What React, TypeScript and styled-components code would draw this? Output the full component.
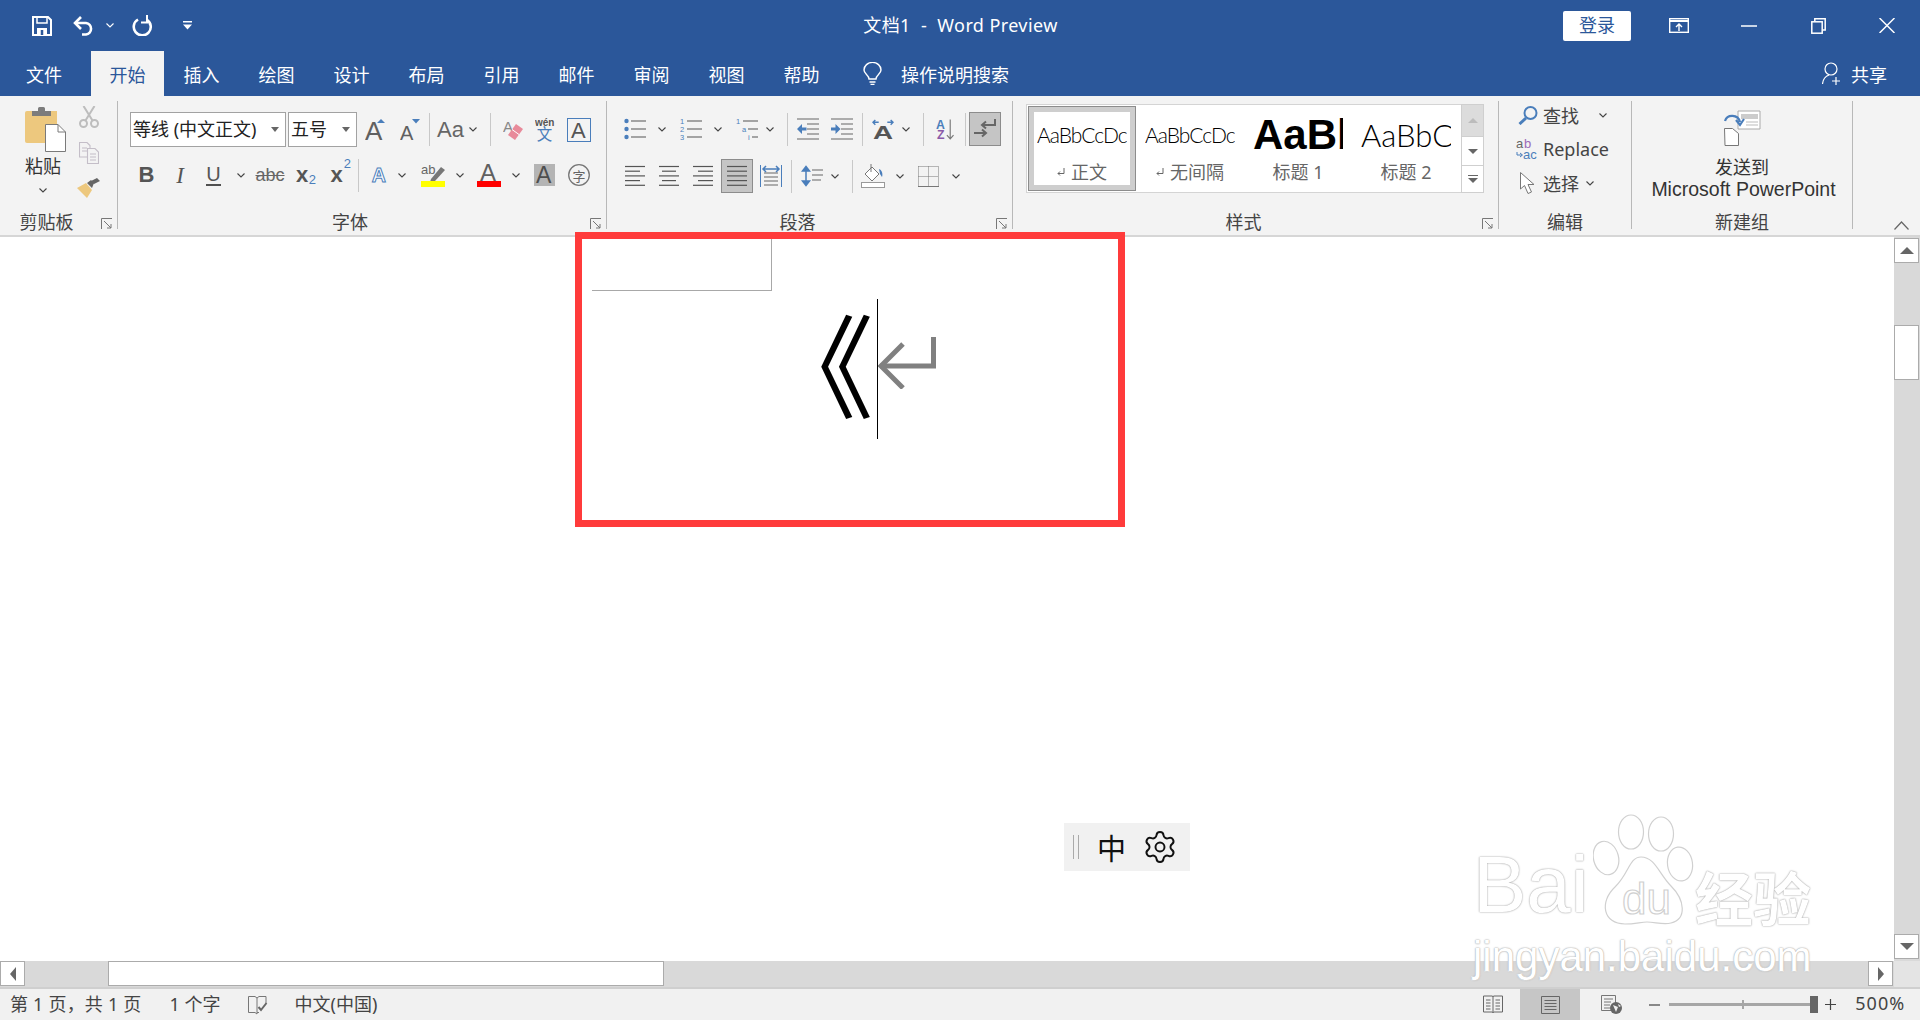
import React from "react";
import styled, { createGlobalStyle } from "styled-components";
import { Settings } from "lucide-react";

const UI_FONT = `"Noto Sans", "Noto Sans CJK SC", sans-serif`;
const ARIAL = `"Liberation Sans", "Noto Sans CJK SC", sans-serif`;
const BLUE = "#2b579a";
const ICON_BLUE = "#4a7ebb";
const ICON_GRAY = "#606060";

const GlobalStyle = createGlobalStyle`
  html, body { margin: 0; padding: 0; height: 100%; background: #fff; }
  #root { height: 100%; }
`;

// ==================== Shell ====================

const App_ = styled.div`
  position: relative;
  width: 1920px;
  height: 1020px;
  overflow: hidden;
  display: flex;
  flex-direction: column;
  font-family: ${UI_FONT};
  font-size: 18px;
  color: #444;
`;

const TitleBar = styled.div`
  height: 51px;
  flex: none;
  display: flex;
  align-items: center;
  background: ${BLUE};
  color: #fff;
`;

const TitleText = styled.div`
  width: 195px;
  margin-left: 671px;
  padding-bottom: 4px;
  font-size: 18px;
  letter-spacing: 0.4px;
  white-space: pre;
  text-align: center;
`;

const QatIcon = styled.span<{ $ml: number; $w: number }>`
  display: inline-flex;
  flex: none;
  justify-content: center;
  width: ${(p) => p.$w}px;
  margin-left: ${(p) => p.$ml}px;
`;

const SignIn = styled.button`
  width: 68px;
  height: 30px;
  margin-left: 505px;
  flex: none;
  border: 0;
  border-radius: 2px;
  background: #fff;
  color: ${BLUE};
  font: 18px ${UI_FONT};
  padding: 0 0 4px;
`;

const TabBar = styled.div`
  height: 45px;
  flex: none;
  display: flex;
  align-items: stretch;
  padding-left: 7px;
  background: ${BLUE};
  color: #fff;
`;

const Tab = styled.div<{ $w?: number; $active?: boolean; $ml?: number }>`
  width: ${(p) => p.$w ?? 75}px;
  margin-left: ${(p) => p.$ml ?? 0}px;
  flex: none;
  display: flex;
  align-items: center;
  justify-content: center;
  box-sizing: border-box;
  background: ${(p) => (p.$active ? "#f3f3f3" : "transparent")};
  color: ${(p) => (p.$active ? BLUE : "#fff")};
`;

const TellMe = styled.div`
  display: flex;
  align-items: center;
  margin-left: 24px;
  gap: 19px;
`;

const ShareBox = styled.div`
  display: flex;
  align-items: center;
  margin-left: 813px;
  gap: 11px;
`;

// ==================== Ribbon ====================

const Ribbon = styled.div`
  height: 141px;
  flex: none;
  box-sizing: border-box;
  display: flex;
  padding-top: 5px;
  background: #f3f3f3;
  border-bottom: 2px solid #d6d6d6;
`;

const Group = styled.div<{ $w: number }>`
  width: ${(p) => p.$w}px;
  height: 128px;
  flex: none;
  box-sizing: border-box;
  display: flex;
  flex-direction: column;
  border-right: 1px solid #b8b8b8;
`;

const GroupBody = styled.div`
  height: 112px;
  flex: none;
  display: flex;
  flex-direction: column;
`;

const LabelRow = styled.div`
  height: 16px;
  display: flex;
  line-height: 19px;
`;

const Label = styled.div`
  flex: 1;
  text-align: center;
  white-space: nowrap;
  color: #444;
`;

const LauncherBox = styled.span`
  width: 24px;
  height: 16px;
  flex: none;
  display: flex;
  padding-left: 8px;
  padding-top: 5px;
  box-sizing: border-box;
`;

const Row = styled.div<{ $h: number; $mt: number; $pl: number }>`
  height: ${(p) => p.$h}px;
  margin-top: ${(p) => p.$mt}px;
  padding-left: ${(p) => p.$pl}px;
  display: flex;
  align-items: center;
`;

const ClipboardRow = styled.div`
  display: flex;
  align-items: flex-start;
`;

const Tool = styled.span<{ $w: number; $ml?: number }>`
  width: ${(p) => p.$w}px;
  margin-left: ${(p) => p.$ml ?? 0}px;
  flex: none;
  display: inline-flex;
  align-items: center;
  justify-content: center;
  position: relative;
`;

const ToggledTool = styled(Tool)`
  height: 34px;
  box-sizing: border-box;
  background: #c5c5c5;
  border: 1px solid #8c8c8c;
`;

const Sep = styled.i<{ $ml: number }>`
  display: block;
  flex: none;
  width: 1px;
  height: 33px;
  margin-left: ${(p) => p.$ml}px;
  background: #c8c8c8;
`;

const FontSelect = styled.div<{ $w: number; $ml?: number }>`
  width: ${(p) => p.$w}px;
  margin-left: ${(p) => p.$ml ?? 0}px;
  height: 35px;
  flex: none;
  box-sizing: border-box;
  display: flex;
  align-items: center;
  justify-content: space-between;
  padding: 0 6px 0 2px;
  background: #fff;
  border: 1px solid #a2a2a2;
  color: #222;
  white-space: nowrap;
`;

const SelectText = styled.span`
  padding-bottom: 4px;
`;

const SelectArrow = styled.i`
  width: 0;
  height: 0;
  border-left: 4.5px solid transparent;
  border-right: 4.5px solid transparent;
  border-top: 5px solid #666;
`;

const Glyph = styled.span<{ $size: number; $bold?: boolean; $italic?: boolean; $serif?: boolean; $under?: boolean; $strike?: boolean; $light?: boolean }>`
  font-family: ${(p) => (p.$serif ? `"Liberation Serif", serif` : ARIAL)};
  font-size: ${(p) => p.$size}px;
  font-weight: ${(p) => (p.$bold ? 700 : 400)};
  font-style: ${(p) => (p.$italic ? "italic" : "normal")};
  color: ${(p) => (p.$light ? "#666" : "#555")};
  line-height: 1;
  text-decoration: ${(p) => (p.$strike ? "line-through" : "none")};
  border-bottom: ${(p) => (p.$under ? "2px solid #505050" : "0")};
`;

const XGlyph = styled(Glyph)`
  margin-right: 7px;
`;

const Script = styled.span<{ $up?: boolean }>`
  font: 13px ${ARIAL};
  color: ${ICON_BLUE};
  position: absolute;
  right: -1px;
  top: ${(p) => (p.$up ? "-8px" : "8px")};
`;

const PasteColumn = styled.div`
  width: 72px;
  margin-left: 7px;
  padding-top: 6px;
  flex: none;
  display: flex;
  flex-direction: column;
  align-items: center;
  & > svg { margin-left: 4px; }
`;

const PasteText = styled.div`
  margin-top: 2px;
  line-height: 24px;
  color: #333;
`;

const PasteChevron = styled.span`
  margin-top: 8px;
  line-height: 0;
`;

const SmallTools = styled.div`
  width: 25px;
  margin-left: -3px;
  padding-top: 5px;
  display: flex;
  flex-direction: column;
  align-items: center;
  gap: 14px;
`;

const Gallery = styled.div`
  display: flex;
  margin: 3px 0 0 13px;
`;

const StyleList = styled.div`
  width: 435px;
  height: 89px;
  box-sizing: border-box;
  display: flex;
  padding: 1px 0 0 1px;
  background: #fff;
  border: 1px solid #d4d4d4;
  border-right: 0;
`;

const StyleItem = styled.div<{ $active?: boolean }>`
  width: 108px;
  height: 85px;
  box-sizing: border-box;
  border: 1px solid ${(p) => (p.$active ? "#8c8c8c" : "transparent")};
  box-shadow: ${(p) => (p.$active ? "inset 0 0 0 5px #cecece" : "none")};
  display: flex;
  flex-direction: column;
  align-items: center;
`;

const Preview = styled.div<{ $size: number; $bold?: boolean; $light?: boolean; $track?: number }>`
  width: 90px;
  height: 56px;
  flex: none;
  overflow: hidden;
  white-space: nowrap;
  line-height: 56px;
  font-family: ${(p) => (p.$light ? `"Lato", sans-serif` : ARIAL)};
  font-size: ${(p) => p.$size}px;
  font-weight: ${(p) => (p.$bold ? 700 : p.$light ? 300 : 400)};
  letter-spacing: ${(p) => p.$track ?? 0}px;
  color: #000;
`;

const Caption = styled.div`
  display: flex;
  align-items: center;
  gap: 6px;
  margin-top: 1px;
  line-height: 16px;
  color: #666;
`;

const ScrollCol = styled.div`
  width: 23px;
  display: flex;
  flex-direction: column;
`;

const ScrollBtn = styled.div<{ $h: number; $dim?: boolean }>`
  height: ${(p) => p.$h}px;
  box-sizing: border-box;
  display: flex;
  flex-direction: column;
  gap: 2px;
  align-items: center;
  justify-content: center;
  background: ${(p) => (p.$dim ? "#dcdcdc" : "#fff")};
  border: 1px solid #cfcfcf;
  margin-top: -1px;
  &:first-child { margin-top: 0; }
`;

const GalleryArrow = styled.i<{ $up?: boolean; $dim?: boolean }>`
  width: 0;
  height: 0;
  border-left: 5px solid transparent;
  border-right: 5px solid transparent;
  ${(p) => (p.$up ? "border-bottom" : "border-top")}: 5px solid ${(p) => (p.$dim ? "#bcbcbc" : "#666")};
`;

const GalleryBar = styled.i`
  width: 10px;
  height: 1px;
  background: #666;
`;

const EditRows = styled.div`
  display: flex;
  flex-direction: column;
  gap: 4px;
  margin-top: -1px;
`;

const EditRow = styled.div`
  height: 30px;
  display: flex;
  align-items: center;
  padding-left: 17px;
`;

const EditIcon = styled.span`
  width: 23px;
  margin-right: 4px;
  flex: none;
  display: inline-flex;
  justify-content: center;
`;

const SendColumn = styled.div`
  padding-top: 9px;
  display: flex;
  flex-direction: column;
  align-items: center;
  line-height: 22px;
  color: #333;
  & > svg { margin-bottom: 10px; }
`;

const SendLatin = styled.span`
  font-family: ${ARIAL};
  font-size: 19.5px;
  padding-left: 3px;
`;

const Collapse = styled.div`
  margin: 120px 0 0 41px;
  line-height: 0;
`;

// ==================== Document ====================

const Work = styled.div`
  flex: 1;
  min-height: 0;
  display: grid;
  grid-template-columns: 1fr 26px;
  grid-template-rows: 1fr 26px;
`;

const Page = styled.div`
  overflow: hidden;
  background: #fff;
`;

const CropMark = styled.div`
  width: 180px;
  height: 54px;
  margin-left: 592px;
  box-sizing: border-box;
  border-right: 1px solid #a8a8a8;
  border-bottom: 1px solid #a8a8a8;
`;

const TextLine = styled.div`
  display: flex;
  height: 140px;
  margin: 8px 0 0 757px;
`;

const BigGlyph = styled.span`
  width: 120px;
  flex: none;
  box-sizing: border-box;
  padding-right: 3px;
  text-align: right;
  font-family: "Noto Sans CJK SC", sans-serif;
  font-size: 112px;
  font-weight: 400;
  line-height: 124px;
  color: #000;
`;

const Caret = styled.i`
  width: 1px;
  height: 140px;
  flex: none;
  background: #000;
`;

const ReturnMark = styled.svg`
  margin-top: 38px;
  flex: none;
`;

const VTrack = styled.div`
  display: flex;
  flex-direction: column;
  padding-top: 1px;
  background: #d9d9d9;
`;

const HTrack = styled.div`
  display: flex;
  background: #d9d9d9;
`;

const ScrollArrowBtn = styled.div<{ $mb?: number; $mr?: number }>`
  width: 25px;
  height: 25px;
  flex: none;
  box-sizing: border-box;
  margin-bottom: ${(p) => p.$mb ?? 0}px;
  margin-right: ${(p) => p.$mr ?? 0}px;
  display: flex;
  align-items: center;
  justify-content: center;
  background: #fff;
  border: 1px solid #ababab;
`;

const TrackGap = styled.div`
  flex: 1;
`;

const VThumb = styled.div`
  width: 25px;
  height: 55px;
  margin-top: 62px;
  box-sizing: border-box;
  background: #fff;
  border: 1px solid #ababab;
`;

const HThumb = styled.div`
  width: 556px;
  height: 25px;
  margin-left: 83px;
  box-sizing: border-box;
  background: #fff;
  border: 1px solid #ababab;
`;

const Corner = styled.div`
  background: #e4e4e4;
`;

const Triangle = styled.i<{ $dir: "up" | "down" | "left" | "right" }>`
  width: 0;
  height: 0;
  ${(p) =>
    p.$dir === "up" || p.$dir === "down"
      ? `border-left: 7px solid transparent; border-right: 7px solid transparent; border-${p.$dir === "up" ? "bottom" : "top"}: 7px solid #666;`
      : `border-top: 7px solid transparent; border-bottom: 7px solid transparent; border-${p.$dir === "left" ? "right" : "left"}: 6px solid #666;`}
`;

// ==================== Status bar ====================

const StatusBar = styled.div`
  height: 33px;
  flex: none;
  box-sizing: border-box;
  display: flex;
  align-items: center;
  background: #f1f1f1;
  border-top: 2px solid #cfcfcf;
  color: #444;
  white-space: pre;
`;

const StatusText = styled.span<{ $ml: number; $track?: number }>`
  margin-left: ${(p) => p.$ml}px;
  padding-bottom: 4px;
  letter-spacing: ${(p) => p.$track ?? 0}px;
  flex: none;
`;

const ViewBtn = styled.span<{ $w: number; $ml: number; $active?: boolean }>`
  width: ${(p) => p.$w}px;
  margin-left: ${(p) => p.$ml}px;
  height: 100%;
  flex: none;
  display: flex;
  align-items: center;
  justify-content: center;
  background: ${(p) => (p.$active ? "#c6c6c6" : "transparent")};
`;

const ZoomGlyph = styled.svg<{ $ml: number }>`
  margin-left: ${(p) => p.$ml}px;
  flex: none;
`;

const ZoomTrack = styled.div`
  position: relative;
  width: 141px;
  height: 3px;
  margin-left: 9px;
  flex: none;
  background: #a6a6a6;
`;

const ZoomTick = styled.i`
  position: absolute;
  left: 73px;
  top: -3px;
  width: 2px;
  height: 9px;
  background: #a6a6a6;
`;

const ZoomHandle = styled.i`
  width: 8px;
  height: 17px;
  flex: none;
  background: #666;
`;

// ==================== Overlays ====================

const RedBox = styled.div`
  position: absolute;
  left: 575px;
  top: 232px;
  width: 550px;
  height: 295px;
  box-sizing: border-box;
  border: 7px solid #ff3b3b;
`;

const ImeBar = styled.div`
  position: absolute;
  left: 1064px;
  top: 823px;
  width: 126px;
  height: 48px;
  box-sizing: border-box;
  padding-left: 9px;
  display: flex;
  align-items: center;
  background: #f1f1f1;
  color: #111;
`;

const ImeHandle = styled.i`
  width: 4px;
  height: 24px;
  flex: none;
  border-left: 1px solid #aaa;
  border-right: 1px solid #aaa;
`;

const ImeChar = styled.span`
  width: 29px;
  margin-left: 18px;
  margin-right: 16px;
  flex: none;
  font: 29px "Noto Sans CJK SC", sans-serif;
  line-height: 1;
`;

const Watermark = styled.div`
  position: absolute;
  left: 1473px;
  top: 812px;
  width: 350px;
  pointer-events: none;
`;

const WatermarkLogo = styled.div`
  display: flex;
  align-items: flex-end;
  height: 113px;
`;

const WatermarkText = styled.span<{ $size: number; $w: number; $cjk?: boolean }>`
  width: ${(p) => p.$w}px;
  flex: none;
  font-family: ${(p) => (p.$cjk ? `"Noto Sans CJK SC", sans-serif` : ARIAL)};
  font-size: ${(p) => p.$size}px;
  font-weight: ${(p) => (p.$cjk ? 700 : 400)};
  line-height: 1;
  white-space: nowrap;
  color: #fff;
  -webkit-text-stroke: ${(p) => (p.$cjk ? "0" : "3px #fff")};
  paint-order: stroke fill;
  text-shadow: 0 0 2px #a0a0a0, 0 0 1px #b5b5b5;
`;

const WatermarkUrl = styled(WatermarkText)`
  display: block;
  margin-top: 11px;
  -webkit-text-stroke: 1px #fff;
`;

// ==================== Icons ====================

const ChevronSvg = styled.svg<{ $ml?: number }>`
  flex: none;
  margin-left: ${(p) => p.$ml ?? 0}px;
`;

const Chevron = ({ ml, color = "#444" }: { ml?: number; color?: string }) => (
  <ChevronSvg width="8" height="5" viewBox="0 0 8 5" $ml={ml}>
    <path d="M.5.5 4 4 7.500.5" fill="none" stroke={color} strokeWidth="1.100" />
  </ChevronSvg>
);

const Launcher = () => (
  <svg width="11" height="11" viewBox="0 0 11 11" fill="none" stroke="#777" strokeWidth="1">
    <path d="M.5 11V.5H11" />
    <path d="M3 3l7 7M10 6v4H6" />
  </svg>
);

const LINE_WIDTHS = {
  left: [[0, 20], [0, 15], [0, 20], [0, 15], [0, 20]],
  center: [[0, 20], [3, 17], [0, 20], [3, 17], [0, 20]],
  right: [[0, 20], [5, 20], [0, 20], [5, 20], [0, 20]],
  justify: [[0, 20], [0, 20], [0, 20], [0, 20], [0, 20]],
};

const AlignIcon = ({ kind }: { kind: keyof typeof LINE_WIDTHS }) => (
  <svg width="20" height="22" viewBox="0 0 20 22" stroke="#555" strokeWidth="1.200">
    {LINE_WIDTHS[kind].map(([a, b], i) => (
      <path key={i} d={`M${a} ${1.5 + i * 4.7}H${b}`} />
    ))}
  </svg>
);

const ListIcon = ({ kind }: { kind: "bullet" | "number" | "multi" }) => (
  <svg width="22" height="22" viewBox="0 0 22 22" fill={ICON_BLUE} stroke="none" fontFamily="Liberation Sans" fontSize="7.500">
    {kind === "bullet" && (
      <>
        <circle cx="2.500" cy="3" r="2.200" />
        <circle cx="2.500" cy="11" r="2.200" />
        <circle cx="2.500" cy="19" r="2.200" />
      </>
    )}
    {kind === "number" && (
      <>
        <text x="0" y="6">1</text>
        <text x="0" y="14">2</text>
        <text x="0" y="22">3</text>
      </>
    )}
    {kind === "multi" && (
      <>
        <text x="0" y="6">1</text>
        <text x="6" y="14">a</text>
        <text x="12" y="22">i</text>
      </>
    )}
    <path
      d={kind === "multi" ? "M7 3H22M12 11H22M16 19H22" : "M7 3H22M7 11H22M7 19H22"}
      fill="none"
      stroke="#555"
      strokeWidth="1.200"
    />
  </svg>
);

const IndentIcon = ({ flip }: { flip?: boolean }) => (
  <svg width="22" height="22" viewBox="0 0 22 22">
    <path d="M0 1H22M10 6H22M10 11H22M10 16H22M0 21H22" stroke="#666" strokeWidth="1.200" />
    {flip ? (
      <path d="M0 9.500H4.500V6L9.500 11 4.500 16V12.500H0Z" fill={ICON_BLUE} />
    ) : (
      <path d="M9.500 9.500H5V6L0 11 5 16V12.500H9.500Z" fill={ICON_BLUE} />
    )}
  </svg>
);

const A = ({ x, y, size, fill = ICON_GRAY, weight = 400 }: { x: number; y: number; size: number; fill?: string; weight?: number }) => (
  <text x={x} y={y} fontSize={size} fontFamily="Liberation Sans" fontWeight={weight} fill={fill}>
    A
  </text>
);

const Mark = () => (
  <svg width="8" height="9" viewBox="0 0 8 9" fill="none" stroke="#666">
    <path d="M7 0V5.500H1M3 3.500L1 5.500L3 7.500" />
  </svg>
);

const App = () => (
  <App_>
    <GlobalStyle />
    <TitleBar>
      <QatIcon $ml={31} $w={21}>
        <svg width="20" height="20" viewBox="0 0 20 20" fill="none" stroke="#fff" strokeWidth="2">
          <path d="M1 1H16L19 4V19H1Z" />
          <path d="M5 12H15V19H5Z" fill="#fff" stroke="none" />
          <path d="M10 14V19" stroke={BLUE} strokeWidth="2.500" />
          <path d="M5 1V7H15V1" strokeWidth="1.500" />
        </svg>
      </QatIcon>
      <QatIcon $ml={21} $w={22}>
        <svg width="22" height="20" viewBox="0 0 22 20" fill="none" stroke="#fff" strokeWidth="2.600">
          <path d="M8 1L2 7L8 13" />
          <path d="M2 7H13A5.800 5.800 0 0 1 13 18.500H9" />
        </svg>
      </QatIcon>
      <QatIcon $ml={10} $w={10}>
        <Chevron color="#fff" />
      </QatIcon>
      <QatIcon $ml={17} $w={21}>
        <svg width="21" height="21" viewBox="0 0 21 21" fill="none" stroke="#fff" strokeWidth="2.600">
          <path d="M6 4.500A8.500 8.500 0 1 0 15 4.800" />
          <path d="M15 0V7.500H9" strokeWidth="2" />
        </svg>
      </QatIcon>
      <QatIcon $ml={29} $w={10}>
        <svg width="9" height="9" viewBox="0 0 9 9" fill="#fff">
          <path d="M0 0H9V1.500H0ZM0 3.500H9L4.500 8.500Z" />
        </svg>
      </QatIcon>
      <TitleText>文档1  -  Word Preview</TitleText>
      <SignIn>登录</SignIn>
      <QatIcon $ml={38} $w={20}>
        <svg width="20" height="15" viewBox="0 0 20 15" fill="none" stroke="#fff" strokeWidth="1.400">
          <rect x=".7" y=".7" width="18.600" height="13.600" />
          <path d="M1 3H19" strokeWidth="2" />
          <path d="M10 13V6M7 9L10 6L13 9" />
        </svg>
      </QatIcon>
      <QatIcon $ml={52} $w={16}>
        <svg width="16" height="2" viewBox="0 0 16 2"><path d="M0 1H16" stroke="#fff" strokeWidth="1.500" /></svg>
      </QatIcon>
      <QatIcon $ml={54} $w={15}>
        <svg width="15" height="16" viewBox="0 0 15 16" fill="none" stroke="#fff" strokeWidth="1.500">
          <rect x=".8" y="3.800" width="10.400" height="11.400" />
          <path d="M3.800 3.500V.8H14.200V12H11.500" />
        </svg>
      </QatIcon>
      <QatIcon $ml={53} $w={16}>
        <svg width="16" height="15" viewBox="0 0 16 15" fill="none" stroke="#fff" strokeWidth="1.500">
          <path d="M.5 0L15.500 15M15.500 0L.5 15" />
        </svg>
      </QatIcon>
    </TitleBar>

    <TabBar>
      <Tab $w={74}>文件</Tab>
      <Tab $w={73} $ml={10} $active>开始</Tab>
      {["插入", "绘图", "设计", "布局", "引用", "邮件", "审阅", "视图", "帮助"].map((t) => (
        <Tab key={t}>{t}</Tab>
      ))}
      <TellMe>
        <svg width="19" height="23" viewBox="0 0 19 23" fill="none" stroke="#fff" strokeWidth="1.400">
          <path d="M6 17C6 13 1 12 1 8A8.400 7.500 0 0 1 18 8C18 12 13 13 13 17Z" />
          <path d="M6.500 20H12.500M7.500 22.500H11.500" />
        </svg>
        操作说明搜索
      </TellMe>
      <ShareBox>
        <svg width="18" height="23" viewBox="0 0 18 23" fill="none" stroke="#fff" strokeWidth="1.200">
          <circle cx="9" cy="7" r="6" />
          <path d="M.5 22C1 17 4 14 7 13M14 15V23M10 19H18" />
        </svg>
        共享
      </ShareBox>
    </TabBar>

    <Ribbon>
      <Group $w={118}>
        <GroupBody>
          <ClipboardRow>
            <PasteColumn>
              <svg width="41" height="45" viewBox="0 0 41 45">
                <path d="M2 4H32V36H2A2 2 0 0 1 0 34V6A2 2 0 0 1 2 4Z" fill="#edc87e" />
                <path d="M7 9V4H13V1.500A1.500 1.500 0 0 1 14.500 0H18.500A1.500 1.500 0 0 1 20 1.500V4H26V9Z" fill="#7c7c7c" />
                <path d="M20.500 17.500H33L40.500 25V44.500H20.500Z" fill="#fff" stroke="#7a7a7a" />
                <path d="M33 17.500V25H40.500" fill="none" stroke="#7a7a7a" />
              </svg>
              <PasteText>粘贴</PasteText>
              <PasteChevron>
                <Chevron />
              </PasteChevron>
            </PasteColumn>
            <SmallTools>
              <svg width="20" height="22" viewBox="0 0 20 22" fill="none" stroke="#bdbdbd" strokeWidth="2">
                <circle cx="4.500" cy="17.500" r="3.500" />
                <circle cx="15.500" cy="17.500" r="3.500" />
                <path d="M6.500 14.500L15.500 0M13.500 14.500L4.500 0" />
              </svg>
              <svg width="20" height="22" viewBox="0 0 20 22" fill="#f3f3f3" stroke="#c4bec8" strokeWidth="1.100">
                <path d="M.5.500H8L11 3.500V15H.5Z" />
                <path d="M8.500 6.500H16L19.500 10V21.500H8.500Z" />
                <path d="M3 6H8M3 9H8M11 12H17M11 15H17M11 18H17" />
              </svg>
              <svg width="23" height="20" viewBox="0 0 23 20">
                <path d="M0 10L9 5L15 12L10 20Z" fill="#edc87e" />
                <path d="M10 5L14 2L17 5L15 10ZM14 3L20 0L23 3L17 6Z" fill="#666" />
              </svg>
            </SmallTools>
          </ClipboardRow>
        </GroupBody>
        <LabelRow>
          <Label>剪贴板</Label>
          <LauncherBox><Launcher /></LauncherBox>
        </LabelRow>
      </Group>

      <Group $w={489}>
        <GroupBody>
          <Row $h={35} $mt={11} $pl={12}>
            <FontSelect $w={156}><SelectText>等线 (中文正文)</SelectText><SelectArrow /></FontSelect>
            <FontSelect $w={69} $ml={2}><SelectText>五号</SelectText><SelectArrow /></FontSelect>
            <Tool $w={20} $ml={8}>
              <svg width="20" height="22" viewBox="0 0 20 22">
                <A x={0} y={21} size={26} />
                <path d="M12 4L16 0L20 4Z" fill={ICON_BLUE} />
              </svg>
            </Tool>
            <Tool $w={20} $ml={15}>
              <svg width="20" height="22" viewBox="0 0 20 22">
                <A x={0} y={21} size={20} />
                <path d="M12 0H20L16 4.500Z" fill={ICON_BLUE} />
              </svg>
            </Tool>
            <Sep $ml={9} />
            <Tool $w={23} $ml={9}>
              <Glyph $size={22} $light>Aa</Glyph>
            </Tool>
            <Tool $w={8} $ml={7}><Chevron /></Tool>
            <Sep $ml={13} />
            <Tool $w={20} $ml={12}>
              <svg width="20" height="22" viewBox="0 0 20 22">
                <A x={0} y={13} size={15} fill="#888" />
                <path d="M13 5L20 10L12 21L5 16Z" fill="#e88a9a" />
                <path d="M9 10.500L16 15.500" stroke="#fff" strokeWidth="1" />
              </svg>
            </Tool>
            <Tool $w={20} $ml={12}>
              <svg width="22" height="24" viewBox="0 0 22 24">
                <text x="0" y="8" fontSize="11" fontWeight="700" fontFamily="Liberation Sans" fill="#555">wén</text>
                <text x="2" y="23" fontSize="17" fontFamily="Noto Sans CJK SC" fill={ICON_BLUE}>文</text>
              </svg>
            </Tool>
            <Tool $w={24} $ml={12}>
              <svg width="24" height="24" viewBox="0 0 24 24">
                <rect x=".5" y=".5" width="23" height="23" fill="none" stroke={ICON_BLUE} />
                <A x={4} y={20} size={22} fill="#555" />
              </svg>
            </Tool>
          </Row>
          <Row $h={34} $mt={11} $pl={22}>
            <Tool $w={13}><Glyph $size={22} $bold>B</Glyph></Tool>
            <Tool $w={12} $ml={21}><Glyph $size={23} $italic $serif>I</Glyph></Tool>
            <Tool $w={13} $ml={21}><Glyph $size={20} $under>U</Glyph></Tool>
            <Tool $w={8} $ml={17}><Chevron /></Tool>
            <Tool $w={24} $ml={13}><Glyph $size={18} $strike $light>abc</Glyph></Tool>
            <Tool $w={19} $ml={14}>
              <XGlyph $size={22} $bold>x</XGlyph>
              <Script>2</Script>
            </Tool>
            <Tool $w={20} $ml={15}>
              <XGlyph $size={22} $bold>x</XGlyph>
              <Script $up>2</Script>
            </Tool>
            <Sep $ml={8} />
            <Tool $w={18} $ml={11}>
              <svg width="22" height="24" viewBox="0 0 22 24">
                <text x="2" y="21" fontSize="24" fontFamily="Liberation Sans" fontWeight="700" fill="#fff" stroke={ICON_BLUE} strokeWidth="1.200">A</text>
              </svg>
            </Tool>
            <Tool $w={8} $ml={10}><Chevron /></Tool>
            <Tool $w={24} $ml={15}>
              <svg width="24" height="24" viewBox="0 0 24 24">
                <text x="0" y="11" fontSize="13" fontFamily="Liberation Sans" fill="#666">ab</text>
                <path d="M10 16L20 4L24 7L14 18L9 19Z" fill="#777" />
                <rect y="18" width="24" height="6" fill="#ffff00" />
              </svg>
            </Tool>
            <Tool $w={8} $ml={11}><Chevron /></Tool>
            <Tool $w={24} $ml={13}>
              <svg width="24" height="24" viewBox="0 0 24 24">
                <A x={3} y={18} size={24} />
                <rect y="18" width="24" height="6" fill="#ff0000" />
              </svg>
            </Tool>
            <Tool $w={8} $ml={11}><Chevron /></Tool>
            <Tool $w={21} $ml={14}>
              <svg width="21" height="22" viewBox="0 0 21 22">
                <rect width="21" height="22" fill="#b4b4b4" />
                <A x={2} y={19} size={23} fill="#4e4e4e" weight={400} />
              </svg>
            </Tool>
            <Tool $w={22} $ml={13}>
              <svg width="22" height="22" viewBox="0 0 22 22">
                <circle cx="11" cy="11" r="10.300" fill="none" stroke="#777" strokeWidth="1.300" />
                <text x="4.500" y="16.500" fontSize="13" fontFamily="Noto Sans CJK SC" fill="#666">字</text>
              </svg>
            </Tool>
          </Row>
        </GroupBody>
        <LabelRow>
          <Label>字体</Label>
          <LauncherBox><Launcher /></LauncherBox>
        </LabelRow>
      </Group>

      <Group $w={406}>
        <GroupBody>
          <Row $h={34} $mt={11} $pl={17}>
            <Tool $w={22}><ListIcon kind="bullet" /></Tool>
            <Tool $w={8} $ml={12}><Chevron /></Tool>
            <Tool $w={22} $ml={14}><ListIcon kind="number" /></Tool>
            <Tool $w={8} $ml={12}><Chevron /></Tool>
            <Tool $w={22} $ml={14}><ListIcon kind="multi" /></Tool>
            <Tool $w={8} $ml={8}><Chevron /></Tool>
            <Sep $ml={13} />
            <Tool $w={22} $ml={9}><IndentIcon /></Tool>
            <Tool $w={22} $ml={12}><IndentIcon flip /></Tool>
            <Sep $ml={9} />
            <Tool $w={22} $ml={9}>
              <svg width="23" height="20" viewBox="0 0 23 20">
                <path d="M7 3H1M3.500.5L1 3L3.500 5.500M16 3H22M19.500.5L22 3L19.500 5.500" fill="none" stroke={ICON_BLUE} strokeWidth="1.500" />
                <text x="1" y="20" fontSize="20" fontWeight="700" fontFamily="Liberation Sans" fill="#555" textLength="21" lengthAdjust="spacingAndGlyphs">A</text>
              </svg>
            </Tool>
            <Tool $w={8} $ml={8}><Chevron /></Tool>
            <Sep $ml={13} />
            <Tool $w={18} $ml={12}>
              <svg width="19" height="23" viewBox="0 0 19 23" fontFamily="Liberation Sans" fontWeight="700" fontSize="13">
                <text x="0" y="11" fill={ICON_BLUE}>A</text>
                <text x="1" y="22" fill="#8a5aa8">Z</text>
                <path d="M15 1V21M11.500 17.500L15 21.500L18.500 17.500" fill="none" stroke="#777" strokeWidth="1.200" />
              </svg>
            </Tool>
            <Sep $ml={11} />
            <ToggledTool $w={32} $ml={3}>
              <svg width="22" height="20" viewBox="0 0 22 20" fill="none" stroke="#666" strokeWidth="2">
                <path d="M21 0V6H9M12 2.500L8 6L12 9.500" />
                <path d="M0 14H11M8 10.500L12 14L8 17.500" />
              </svg>
            </ToggledTool>
          </Row>
          <Row $h={34} $mt={13} $pl={18}>
            <Tool $w={20}><AlignIcon kind="left" /></Tool>
            <Tool $w={20} $ml={14}><AlignIcon kind="center" /></Tool>
            <Tool $w={20} $ml={14}><AlignIcon kind="right" /></Tool>
            <ToggledTool $w={32} $ml={8}><AlignIcon kind="justify" /></ToggledTool>
            <Tool $w={22} $ml={7}>
              <svg width="22" height="22" viewBox="0 0 22 22">
                <path d="M4 8H18M4 12H18M4 16H18M4 20H18" stroke="#666" strokeWidth="1.100" />
                <path d="M.5 0V22M21.500 0V22" stroke={ICON_BLUE} />
                <path d="M3 4H19M6 1L3 4L6 7M16 1L19 4L16 7" fill="none" stroke={ICON_BLUE} strokeWidth="1.500" />
              </svg>
            </Tool>
            <Sep $ml={9} />
            <Tool $w={22} $ml={9}>
              <svg width="22" height="22" viewBox="0 0 22 22">
                <path d="M5 2V20M1.500 6L5 1.500L8.500 6ZM1.500 16L5 20.500L8.500 16Z" fill={ICON_BLUE} stroke={ICON_BLUE} strokeWidth="1.500" />
                <path d="M11 5H22M11 10H22M11 15H20" stroke="#666" strokeWidth="1.200" />
              </svg>
            </Tool>
            <Tool $w={8} $ml={8}><Chevron /></Tool>
            <Sep $ml={13} />
            <Tool $w={24} $ml={8}>
              <svg width="24" height="24" viewBox="0 0 24 24">
                <path d="M4 10L11 3L18 10L11 17Z" fill="#fff" stroke="#777" />
                <path d="M10 0V8" stroke="#777" />
                <path d="M18 5C21 6 22 10 21 13L19 10Z" fill={ICON_BLUE} />
                <rect x=".5" y="18.500" width="23" height="5" fill="#fff" stroke="#999" />
              </svg>
            </Tool>
            <Tool $w={8} $ml={11}><Chevron /></Tool>
            <Tool $w={21} $ml={14}>
              <svg width="21" height="21" viewBox="0 0 21 21" fill="none" stroke="#777" strokeDasharray="1 1">
                <path d="M.5.500H20.500V20.500M.5.500V20.500M10.500.5V20.500M.5 10.500H20.500" />
                <path d="M0 20.500H21" strokeDasharray="none" />
              </svg>
            </Tool>
            <Tool $w={8} $ml={13}><Chevron /></Tool>
          </Row>
        </GroupBody>
        <LabelRow>
          <Label>段落</Label>
          <LauncherBox><Launcher /></LauncherBox>
        </LabelRow>
      </Group>

      <Group $w={486}>
        <GroupBody>
          <Gallery>
            <StyleList>
              <StyleItem $active>
                <Preview $size={21} $light $track={-1}>AaBbCcDc</Preview>
                <Caption><Mark />正文</Caption>
              </StyleItem>
              <StyleItem>
                <Preview $size={21} $light $track={-1}>AaBbCcDc</Preview>
                <Caption><Mark />无间隔</Caption>
              </StyleItem>
              <StyleItem>
                <Preview $size={42} $bold>AaBbCc</Preview>
                <Caption>标题 1</Caption>
              </StyleItem>
              <StyleItem>
                <Preview $size={31} $light>AaBbCc</Preview>
                <Caption>标题 2</Caption>
              </StyleItem>
            </StyleList>
            <ScrollCol>
              <ScrollBtn $h={33} $dim><GalleryArrow $up $dim /></ScrollBtn>
              <ScrollBtn $h={30}><GalleryArrow /></ScrollBtn>
              <ScrollBtn $h={28}>
                <GalleryBar />
                <GalleryArrow />
              </ScrollBtn>
            </ScrollCol>
          </Gallery>
        </GroupBody>
        <LabelRow>
          <Label>样式</Label>
          <LauncherBox><Launcher /></LauncherBox>
        </LabelRow>
      </Group>

      <Group $w={133}>
        <GroupBody>
          <EditRows>
            <EditRow>
              <EditIcon>
                <svg width="20" height="19" viewBox="0 0 20 19" fill="none" stroke={ICON_BLUE}>
                  <circle cx="12.500" cy="7" r="6" strokeWidth="2" />
                  <path d="M8 12L1.500 18" strokeWidth="3" />
                </svg>
              </EditIcon>
              查找
              <Chevron ml={20} />
            </EditRow>
            <EditRow>
              <EditIcon>
                <svg width="23" height="21" viewBox="0 0 23 21" fontFamily="Liberation Sans" fontSize="13">
                  <text x="0" y="9" fill="#666">a</text>
                  <text x="8" y="9" fill="#9a6ab8">b</text>
                  <text x="7" y="20" fill={ICON_BLUE}>ac</text>
                  <path d="M1 13V16H6M4 14L6.500 16L4 18" fill="none" stroke={ICON_BLUE} />
                </svg>
              </EditIcon>
              Replace
            </EditRow>
            <EditRow>
              <EditIcon>
                <svg width="15" height="22" viewBox="0 0 15 22" fill="#fff" stroke="#777">
                  <path d="M.5.500V17L4.500 13.500L8 21.500L11.500 20L8 12.500H14Z" />
                </svg>
              </EditIcon>
              选择
              <Chevron ml={7} />
            </EditRow>
          </EditRows>
        </GroupBody>
        <LabelRow><Label>编辑</Label></LabelRow>
      </Group>

      <Group $w={221}>
        <GroupBody>
          <SendColumn>
            <svg width="37" height="36" viewBox="0 0 37 36">
              <path d="M14 1H36V19H14Z" fill="#fff" stroke="#aaa" />
              <path d="M17 4H34V9H17Z" fill="#ccc" />
              <path d="M22 12H34M22 15H34" stroke="#bbb" />
              <path d="M0 19H8L14 24V36H.5Z" transform="translate(0.500 -.5)" fill="#fff" stroke="#777" />
              <path d="M1 11C3 4 14 4 16 12M12 10L16 15L20 9" fill="none" stroke={ICON_BLUE} strokeWidth="2.200" />
            </svg>
            发送到
            <SendLatin>Microsoft PowerPoint</SendLatin>
          </SendColumn>
        </GroupBody>
        <LabelRow><Label>新建组</Label></LabelRow>
      </Group>

      <Collapse>
        <svg width="15" height="9" viewBox="0 0 15 9" fill="none" stroke="#666" strokeWidth="1.200">
          <path d="M.5 8.500L7.500 1L14.500 8.500" />
        </svg>
      </Collapse>
    </Ribbon>

    <Work>
      <Page>
        <CropMark />
        <TextLine>
          <BigGlyph>《</BigGlyph>
          <Caret />
          <ReturnMark width="59" height="52" viewBox="0 0 59 52" fill="none" stroke="#808080" strokeWidth="5">
            <path d="M55.500 0V29H2" />
            <path d="M25 7L3 29L25 51" />
          </ReturnMark>
        </TextLine>
      </Page>
      <VTrack>
        <ScrollArrowBtn><Triangle $dir="up" /></ScrollArrowBtn>
        <VThumb />
        <TrackGap />
        <ScrollArrowBtn $mb={2}><Triangle $dir="down" /></ScrollArrowBtn>
      </VTrack>
      <HTrack>
        <ScrollArrowBtn><Triangle $dir="left" /></ScrollArrowBtn>
        <HThumb />
        <TrackGap />
        <ScrollArrowBtn $mr={1}><Triangle $dir="right" /></ScrollArrowBtn>
      </HTrack>
      <Corner />
    </Work>

    <StatusBar>
      <StatusText $ml={10} $track={0.2}>第 1 页，共 1 页</StatusText>
      <StatusText $ml={28}>1 个字</StatusText>
      <ViewBtn $w={22} $ml={26}>
        <svg width="20" height="20" viewBox="0 0 20 20" fill="none" stroke="#777">
          <path d="M.5 1.500H7L9 3V19L7 17.500H.5ZM9 3L11 1.500H18V8M11 17.500H9" />
          <path d="M10.500 12L13 15L18.500 8" stroke="#666" strokeWidth="2" />
        </svg>
      </ViewBtn>
      <StatusText $ml={26}>中文(中国)</StatusText>
      <ViewBtn $w={24} $ml={1104}>
        <svg width="20" height="19" viewBox="0 0 20 19" fill="none" stroke="#666">
          <path d="M.5 1H9.500L10 2L10.500 1H19.500V17H10.500L10 18L9.500 17H.5ZM10 2V17" />
          <path d="M3 5H7.500M3 8H7.500M3 11H7.500M3 14H7.500M12.500 5H17M12.500 8H17M12.500 11H17M12.500 14H17" />
        </svg>
      </ViewBtn>
      <ViewBtn $w={60} $ml={15} $active>
        <svg width="19" height="18" viewBox="0 0 19 18" fill="none" stroke="#666">
          <path d="M.5.500H18.500V17.500H.5ZM3.500 4.500H15.500M3.500 7.500H15.500M3.500 10.500H15.500M3.500 13.500H15.500" />
        </svg>
      </ViewBtn>
      <ViewBtn $w={22} $ml={20}>
        <svg width="21" height="19" viewBox="0 0 21 19">
          <path d="M.5.500H14.500V15.500H.5ZM3 4H12M3 7H10M3 10H9M3 13H9" fill="none" stroke="#777" />
          <circle cx="15" cy="13" r="6" fill="#666" />
          <path d="M12 10L17 12L15 17ZM17 9L20 11L18 12Z" fill="#f1f1f1" />
        </svg>
      </ViewBtn>
      <ZoomGlyph width="11" height="2" viewBox="0 0 11 2" $ml={27}>
        <path d="M0 1H11" stroke="#444" strokeWidth="1.200" />
      </ZoomGlyph>
      <ZoomTrack><ZoomTick /></ZoomTrack>
      <ZoomHandle />
      <ZoomGlyph width="11" height="11" viewBox="0 0 11 11" $ml={7}>
        <path d="M0 5.500H11M5.500 0V11" stroke="#444" strokeWidth="1.200" />
      </ZoomGlyph>
      <StatusText $ml={19} $track={1}>500%</StatusText>
    </StatusBar>

    <RedBox />

    <ImeBar>
      <ImeHandle />
      <ImeChar>中</ImeChar>
      <Settings size={36} strokeWidth={1.3} color="#111" />
    </ImeBar>

    <Watermark>
      <WatermarkLogo>
        <WatermarkText $size={80} $w={120}>Bai</WatermarkText>
        <svg width="102" height="113" viewBox="0 0 102 113" fill="#fff" stroke="#d0d0d0" strokeWidth="1.200">
          <ellipse cx="13" cy="46" rx="12.500" ry="17" transform="rotate(-15 13 46)" />
          <ellipse cx="38" cy="20" rx="12.500" ry="17" />
          <ellipse cx="68" cy="22" rx="12.500" ry="17" />
          <ellipse cx="87" cy="52" rx="12.500" ry="17" transform="rotate(-8 87 52)" />
          <path d="M48 45C36 45 36 62 22 75C6 90 10 112 32 112C42 112 48 110 54 110C62 110 70 113 78 111C94 107 92 88 78 74C66 62 62 45 48 45Z" />
          <text x="29" y="102" fontSize="44" fontFamily="Liberation Sans" fill="#fff" stroke="#d0d0d0">du</text>
        </svg>
        <WatermarkText $size={58} $w={120} $cjk>经验</WatermarkText>
      </WatermarkLogo>
      <WatermarkUrl $size={42} $w={350}>jingyan.baidu.com</WatermarkUrl>
    </Watermark>
  </App_>
);

export default App;
